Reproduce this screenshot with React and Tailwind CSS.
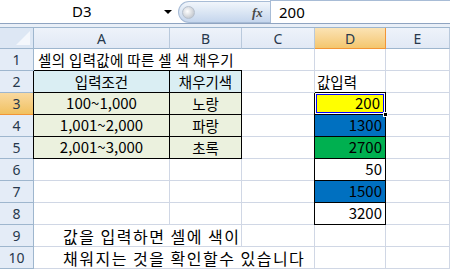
import React from "react";

const KR = { fontFamily: '"Noto Sans CJK KR", "Noto Sans", sans-serif' };
const HD = { fontFamily: '"Noto Sans", "Noto Sans CJK KR", sans-serif' };

const grid = "border-r border-b border-[#d0d7e5]";
const boxTL = "shadow-[0_-1px_0_#000,-1px_0_0_#000]";
const boxT = "shadow-[0_-1px_0_#000]";
const boxL = "shadow-[-1px_0_0_#000]";

function RowHead({ n, active }) {
  return (
    <div
      style={HD}
      className={
        "flex items-center justify-center text-[14px] text-[#27384c] border-b " +
        (active
          ? "bg-gradient-to-b from-[#f9d99f] to-[#f1c15f] border-r border-r-[#f29536] border-b-[#f29536]"
          : "bg-[#e4ecf7] border-r border-r-[#9eb6ce] border-b-[#9eb6ce]")
      }
    >
      {n}
    </div>
  );
}

function Cell({ children, className = "", style }) {
  return (
    <div style={{ ...KR, ...style }} className={"flex items-center text-[14.5px] text-black whitespace-nowrap " + className}>
      {children}
    </div>
  );
}

export default function App() {
  const colHeads = ["A", "B", "C", "D", "E"];
  const dVals = [
    { v: "200", bg: "bg-[#ffff00]" },
    { v: "1300", bg: "bg-[#0070c0]" },
    { v: "2700", bg: "bg-[#00b050]" },
    { v: "50", bg: "bg-white" },
    { v: "1500", bg: "bg-[#0070c0]" },
    { v: "3200", bg: "bg-white" },
  ];
  const tableRows = [
    ["100~1,000", "노랑"],
    ["1,001~2,000", "파랑"],
    ["2,001~3,000", "초록"],
  ];

  return (
    <div className="w-[457px] h-[276px] bg-white overflow-hidden">
      {/* formula bar */}
      <div className="w-[450px] h-[24px] flex border-b border-[#8fa4c1] bg-white">
        <div className="w-[178px] flex items-center relative">
          <span style={HD} className="pl-[72px] text-[15px] text-black leading-none">D3</span>
          <span className="absolute left-[164px] top-[10px] w-0 h-0 border-l-[4px] border-r-[4px] border-t-[4px] border-l-transparent border-r-transparent border-t-black"></span>
        </div>
        <div className="w-[92px] h-[22px] mt-[1px] rounded-l-full bg-gradient-to-b from-[#f1f5fb] via-[#dbe6f4] to-[#c5d6ed] border border-r-0 border-[#a8bcd6] flex items-center relative">
          <span className="ml-[3px] w-[13px] h-[13px] rounded-full bg-[radial-gradient(circle_at_40%_40%,#ffffff,#c9cdd3_70%,#a7adb6)] border border-[#b6c0cd]"></span>
          <span className="absolute left-[73px] top-[1px] italic font-bold text-[13px] text-[#4a4a4a]" style={{ fontFamily: '"Liberation Serif", serif' }}>
            fx
          </span>
        </div>
        <div className="flex-1 flex items-center border-l border-t border-[#a8bcd6] pl-[8px]">
          <span style={HD} className="text-[15px] text-black leading-none">200</span>
        </div>
      </div>
      <div className="w-[450px] h-[4px] bg-[#e9eff7] border-b border-[#9eb6ce]"></div>

      {/* sheet */}
      <div className="grid grid-cols-[34px_136px_72px_73px_71px_64px] grid-rows-[21px_repeat(10,22px)] w-[450px]">
        {/* corner */}
        <div className="relative bg-[#dde7f4] border-r border-b border-[#9eb6ce] overflow-hidden">
          <svg className="absolute right-[3px] bottom-[3px]" width="14" height="14" viewBox="0 0 14 14">
            <polygon points="14,0 14,14 0,14" fill="#f4f7fc" />
          </svg>
        </div>
        {colHeads.map((c) => (
          <div
            key={c}
            style={HD}
            className={
              "flex items-center justify-center text-[14px] text-[#27384c] border-b " +
              (c === "D"
                ? "bg-gradient-to-b from-[#fbe3b4] to-[#f4c66d] border-r border-r-[#f29536] border-b-[#f29536]"
                : "bg-gradient-to-b from-[#eef3fa] to-[#e1e9f5] border-r border-r-[#b9c9dc] border-b-[#9eb6ce]")
            }
          >
            {c}
          </div>
        ))}

        {/* row 1 */}
        <RowHead n={1} />
        <Cell className={"col-span-3 pl-[4px] tracking-[0.35px] " + grid}>셀의 입력값에 따른 셀 색 채우기</Cell>
        <Cell className={grid} />
        <Cell className={grid} />

        {/* row 2 */}
        <RowHead n={2} />
        <Cell className={"justify-center bg-[#daeef3] border-r border-b border-black " + boxTL}>입력조건</Cell>
        <Cell className={"justify-center bg-[#daeef3] border-r border-b border-black " + boxT}>채우기색</Cell>
        <Cell className={grid} />
        <Cell className={"pl-[2px] " + grid}>값입력</Cell>
        <Cell className={grid} />

        {/* rows 3-8 */}
        {[0, 1, 2, 3, 4, 5].map((i) => {
          const r = i + 3;
          const t = tableRows[i];
          const d = dVals[i];
          return (
            <React.Fragment key={r}>
              <RowHead n={r} active={r === 3} />
              {t ? (
                <>
                  <Cell className={"justify-center bg-[#ebf1de] border-r border-b border-black " + boxL} style={{ fontSize: "15px" }}>
                    {t[0]}
                  </Cell>
                  <Cell className="justify-center bg-[#ebf1de] border-r border-b border-black">{t[1]}</Cell>
                </>
              ) : (
                <>
                  <Cell className={grid} />
                  <Cell className={grid} />
                </>
              )}
              <Cell className={grid} />
              {r === 3 ? (
                <div className={"relative border-r border-b border-black bg-white " + boxTL}>
                  <div className="absolute inset-[1px] border border-[#0000ff] bg-[#ffff00] flex items-center justify-end pr-[3px]">
                    <span style={KR} className="text-[15px] text-black">200</span>
                  </div>
                  <div className="absolute right-[-3px] bottom-[-3px] w-[5px] h-[5px] bg-black border border-white z-10"></div>
                </div>
              ) : (
                <Cell className={"justify-end pr-[3px] border-r border-b border-black " + d.bg + " " + boxL} style={{ fontSize: "15px" }}>
                  {d.v}
                </Cell>
              )}
              <Cell className={grid} />
            </React.Fragment>
          );
        })}

        {/* row 9 */}
        <RowHead n={9} />
        <Cell className={"col-span-2 pl-[29px] tracking-[1.5px] " + grid} style={{ fontSize: "16px" }}>값을 입력하면 셀에 색이</Cell>
        <Cell className={grid} />
        <Cell className={grid} />
        <Cell className={grid} />

        {/* row 10 */}
        <RowHead n={10} />
        <Cell className={"col-span-3 pl-[29px] tracking-[1.5px] " + grid} style={{ fontSize: "16px" }}>채워지는 것을 확인할수 있습니다</Cell>
        <Cell className={grid} />
        <Cell className={grid} />
      </div>
    </div>
  );
}
